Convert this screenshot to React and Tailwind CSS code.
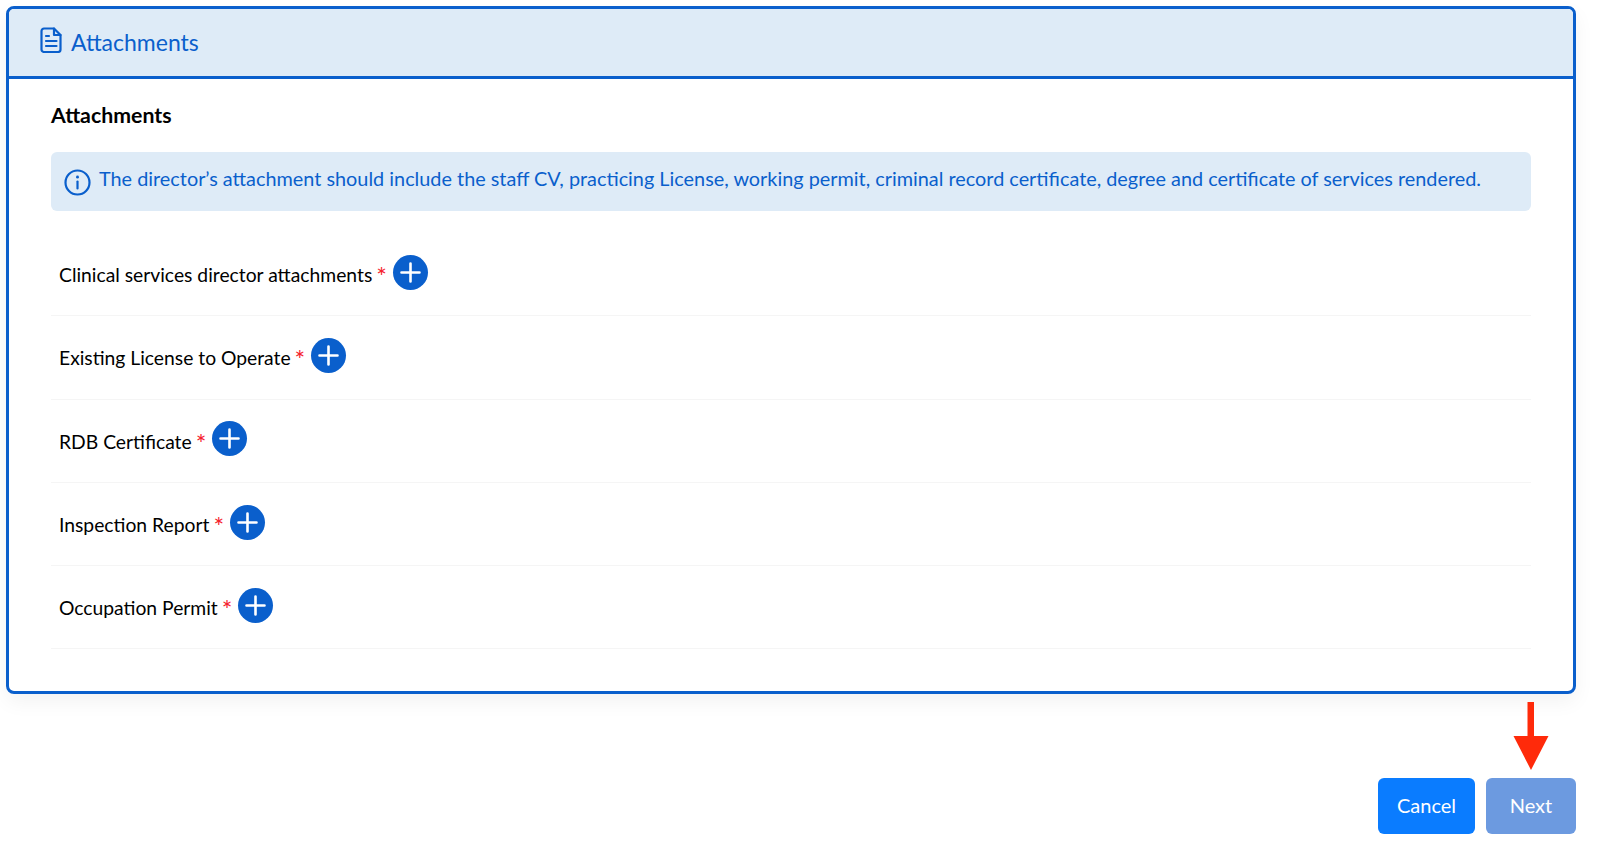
import React from "react";

const rows = [
  "Clinical services director attachments",
  "Existing License to Operate",
  "RDB Certificate",
  "Inspection Report",
  "Occupation Permit",
];

function Row({ label }) {
  return (
    <div className="flex h-[83.3px] items-center border-b border-[#f5f5f5] pl-2">
      <span className="relative top-[1px] text-[19.3px] leading-6 text-black">{label}</span>
      <span className="relative top-[2px] ml-[4px] text-[25px] leading-6 text-[#f5222d]">*</span>
      <button className="relative -top-[2px] ml-[6px] flex h-[35px] w-[35px] items-center justify-center rounded-full bg-[#0a5fcc]">
        <svg width="23" height="23" viewBox="0 0 23 23" fill="none" stroke="white" strokeWidth="2.6" strokeLinecap="round">
          <path d="M11.5 2.5v18M2.5 11.5h18" />
        </svg>
      </button>
    </div>
  );
}

export default function App() {
  return (
    <div className="h-[855px] w-[1600px] overflow-hidden bg-white pl-[6px] pr-[24px] pt-[6px] font-['Lato','Noto_Sans',sans-serif]">
      <div className="h-[688px] overflow-hidden rounded-[8px] border-[3px] border-[#0a5fcc] shadow-[0_8px_20px_rgba(0,0,0,0.05)]">
        <div className="flex h-[70px] items-center gap-[9px] border-b-[3px] border-[#0a5fcc] bg-[#deebf7] pb-[2px] pl-[31px] text-[#0a5fcc]">
          <svg width="22" height="26" viewBox="0 0 22 26" fill="none" stroke="currentColor" strokeWidth="2.2" strokeLinejoin="round" strokeLinecap="round" className="-mt-[3px]">
            <path d="M4 1.5h10l6.5 6.5v14.5a2.5 2.5 0 0 1-2.5 2.5H4a2.5 2.5 0 0 1-2.5-2.5V4A2.5 2.5 0 0 1 4 1.5z" />
            <path d="M14 1.5V8h6.5M6 9h3M6 14h10.5M6 19h10.5" />
          </svg>
          <span className="text-[23px] leading-7">Attachments</span>
        </div>
        <div className="px-[42px] pt-[22px]">
          <h2 className="text-[21.3px] font-bold leading-7 text-black">Attachments</h2>
          <div className="mt-[23px] flex h-[59px] items-center gap-[8px] rounded-[6px] bg-[#deebf7] pl-[13px] text-[#0a5fcc]">
            <svg width="27" height="27" viewBox="0 0 27 27" fill="none" stroke="currentColor" strokeWidth="2.2" strokeLinecap="round" className="mt-[1px] shrink-0">
              <circle cx="13.5" cy="13.5" r="12" />
              <path d="M13.5 12.5v7" />
              <path d="M13.5 8v.2" strokeWidth="2.8" />
            </svg>
            <span className="pb-[7px] text-[19.85px] leading-6">The director’s attachment should include the staff CV, practicing License, working permit, criminal record certificate, degree and certificate of services rendered.</span>
          </div>
          <div className="mt-[22px]">
            {rows.map((r) => (
              <Row key={r} label={r} />
            ))}
          </div>
        </div>
      </div>
      <div className="mt-[84px] flex justify-end gap-[11px]">
        <button className="h-[56px] w-[97px] rounded-[6px] bg-[#0a7cff] pb-[2px] text-[20px] text-white">Cancel</button>
        <div className="relative">
          <svg width="36" height="70" viewBox="0 0 36 70" className="absolute -top-[76px] left-[27px]">
            <path d="M14.5 0h6.5v34h14.5L18 68 .5 34h14z" fill="#ff2a0a" />
          </svg>
          <button className="h-[56px] w-[90px] rounded-[6px] bg-[#6c9ae0] pb-[2px] text-[20px] text-white">Next</button>
        </div>
      </div>
    </div>
  );
}
